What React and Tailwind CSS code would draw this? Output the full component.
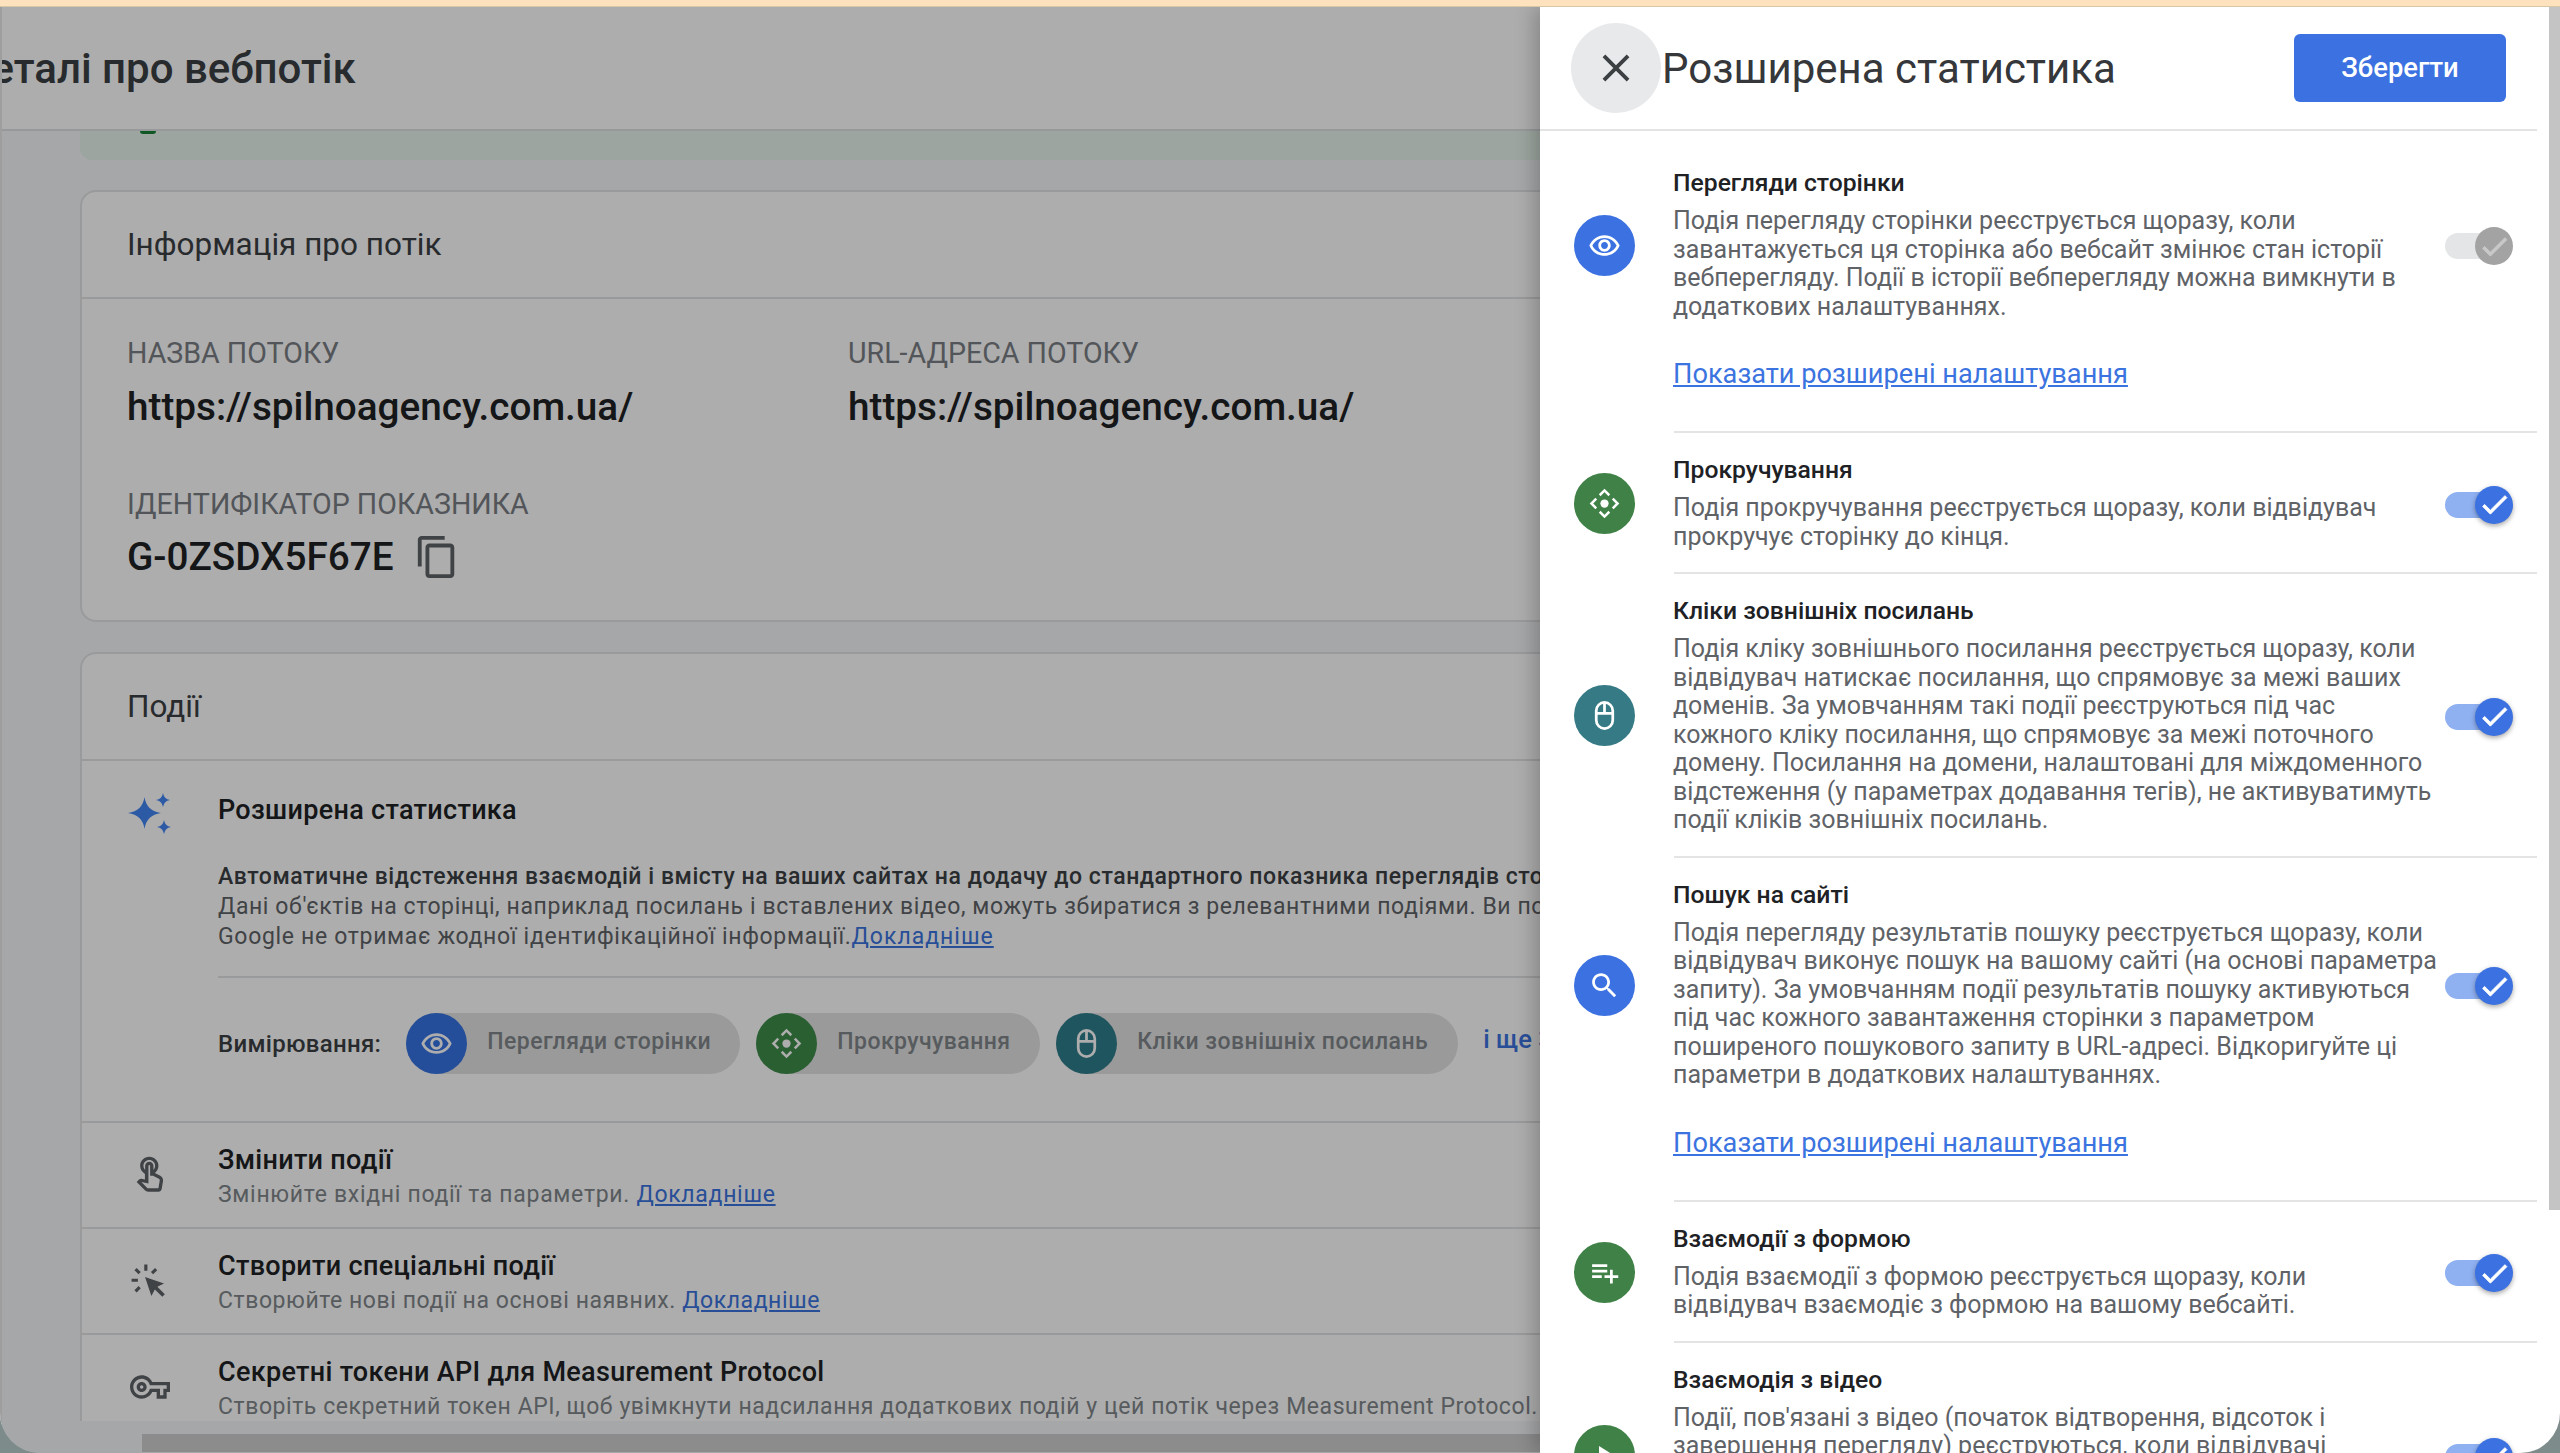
import React from 'react';

const paths = {
  eye: 'M12 6.5c3.79 0 7.17 2.13 8.82 5.5-1.65 3.37-5.02 5.5-8.82 5.5S4.83 15.37 3.18 12C4.83 8.63 8.21 6.5 12 6.5m0-2C7 4.5 2.73 7.61 1 12c1.73 4.39 6 7.5 11 7.5s9.27-3.11 11-7.5c-1.73-4.39-6-7.5-11-7.5zm0 5c1.38 0 2.5 1.12 2.5 2.5s-1.12 2.5-2.5 2.5-2.5-1.12-2.5-2.5 1.12-2.5 2.5-2.5m0-2c-2.48 0-4.5 2.02-4.5 4.5s2.02 4.5 4.5 4.5 4.5-2.02 4.5-4.5-2.02-4.5-4.5-4.5z',
  search: 'M15.5 14h-.79l-.28-.27C15.41 12.59 16 11.11 16 9.5 16 5.91 13.09 3 9.5 3S3 5.91 3 9.5 5.91 16 9.5 16c1.61 0 3.09-.59 4.23-1.57l.27.28v.79l5 4.99L20.49 19l-4.99-5zm-6 0C7.01 14 5 11.99 5 9.5S7.01 5 9.5 5 14 7.01 14 9.5 11.99 14 9.5 14z',
  playlist: 'M14 10H3v2h11v-2zm0-4H3v2h11V6zm4 8v-4h-2v4h-4v2h4v4h2v-4h4v-2h-4zM3 16h7v-2H3v2z',
  play: 'M8 5v14l11-7z',
  check: 'M9 16.17L4.83 12l-1.42 1.41L9 19 21 7l-1.41-1.41z',
  close: 'M19 6.41L17.59 5 12 10.59 6.41 5 5 6.41 10.59 12 5 17.59 6.41 19 12 13.41 17.59 19 19 17.59 13.41 12z',
  touch: 'M18.19 12.44l-3.24-1.62c1.29-1 2.12-2.56 2.12-4.32C17.07 3.47 14.6 1 11.57 1S6.07 3.47 6.07 6.5c0 2.08 1.17 3.89 2.88 4.83v3.43c-2.15-.46-2.02-.44-2.26-.44-.53 0-1.03.21-1.41.59L4 16.22l5.09 5.09C9.52 21.75 10.12 22 10.74 22h6.3c.98 0 1.81-.7 1.97-1.67l.8-4.71c.22-1.3-.43-2.58-1.62-3.18zm-.35 2.85l-.8 4.71h-6.3c-.09 0-.17-.04-.24-.1l-3.68-3.68 4.25.89V6.5c0-.28.22-.5.5-.5s.5.22.5.5v6h1.76l3.46 1.73c.4.2.62.63.55 1.06zM8.07 6.5c0-1.93 1.57-3.5 3.5-3.5s3.5 1.57 3.5 3.5c0 .95-.38 1.81-1 2.44V6.5C14.07 5.12 12.95 4 11.57 4S9.07 5.12 9.07 6.5v2.44c-.62-.63-1-1.49-1-2.44z',
  key: 'M22 19h-6v-4h-2.68c-1.14 2.42-3.6 4-6.32 4-3.86 0-7-3.14-7-7s3.14-7 7-7c2.72 0 5.17 1.58 6.32 4H24v6h-2v4zm-4-2h2v-4h2v-2H11.94l-.23-.67C11.01 8.34 9.11 7 7 7c-2.76 0-5 2.24-5 5s2.24 5 5 5c2.11 0 4.01-1.34 4.71-3.33l.23-.67H18v4zM7 15c-1.65 0-3-1.35-3-3s1.35-3 3-3 3 1.35 3 3-1.35 3-3 3zm0-4c-.55 0-1 .45-1 1s.45 1 1 1 1-.45 1-1-.45-1-1-1z',
  copy: 'M16 1H4c-1.1 0-2 .9-2 2v14h2V3h12V1zm3 4H8c-1.1 0-2 .9-2 2v14c0 1.1.9 2 2 2h11c1.1 0 2-.9 2-2V7c0-1.1-.9-2-2-2zm0 16H8V7h11v14z',
};

const Icon = ({ name, className }) => (
  <svg viewBox="0 0 24 24" fill="currentColor" className={className}>
    <path d={paths[name]} />
  </svg>
);

// Scroll glyph: dot with four chevrons
const ScrollIcon = ({ className }) => (
  <svg viewBox="0 0 24 24" fill="none" stroke="currentColor" strokeWidth="1.8" className={className}>
    <circle cx="12" cy="12" r="3" fill="currentColor" stroke="none" />
    <path d="M8.5 6L12 2.5 15.5 6M8.5 18L12 21.5 15.5 18M6 8.5L2.5 12 6 15.5M18 8.5L21.5 12 18 15.5" />
  </svg>
);

const MouseIcon = ({ className }) => (
  <svg viewBox="0 0 24 24" fill="none" stroke="currentColor" strokeWidth="2" className={className}>
    <rect x="6" y="2.5" width="12" height="19" rx="6" />
    <path d="M6 10.5h12M12 2.5v8" />
  </svg>
);

const SparkleIcon = ({ className }) => (
  <svg viewBox="0 0 42 42" fill="currentColor" className={className}>
    <path d="M14.5 4Q16.5 18 31 20 16.5 22 14.5 36 12.5 22-2 20 12.5 18 14.5 4Z" />
    <path d="M33 0Q34 6 40 7 34 8 33 14 32 8 26 7 32 6 33 0Z" />
    <path d="M34 27Q35 33 41 34 35 35 34 41 33 35 27 34 33 33 34 27Z" />
  </svg>
);

const ClickIcon = ({ className }) => (
  <svg viewBox="0 0 24 24" fill="currentColor" className={className}>
    <path d="M9.5 9.5L21.5 13.5 17.3 15.7 22 20.4 20.4 22 15.7 17.3 13.5 21.5Z" />
    <path d="M10 1.5v4M3.5 4.5l2.6 2.6M16.5 4.5l-2.6 2.6M1 11.5h4M3.5 18.5l2.6-2.6" fill="none" stroke="currentColor" strokeWidth="2" />
  </svg>
);

const Toggle = ({ disabled }) => (
  <div className="flex items-center">
    <div className={`h-[26px] w-[50px] rounded-full ${disabled ? 'bg-[#e3e5e6]' : 'bg-[#8fb0f1]'}`} />
    <div
      className={`-ml-[20px] flex h-[38px] w-[38px] items-center justify-center rounded-full ${
        disabled ? 'bg-[#a3a3a3] text-[#c9c9c9]' : 'bg-[#3b71e0] text-white shadow-[0_2px_5px_rgba(0,0,0,0.35)]'
      }`}
    >
      <Icon name="check" className="h-[33px] w-[33px] stroke-current stroke-[0.7]" />
    </div>
  </div>
);

const ShowMore = () => (
  <div className="ml-[133px] pt-[17px] pb-[44px] text-[27.2px] leading-[28px] text-[#3b74e0] underline">
    Показати розширені налаштування
  </div>
);

const Feature = ({ title, lines, color, icon, disabled, more, first }) => (
  <section>
    <div className={`flex items-center pl-[34px] pr-[24px] pb-[22px] ${first ? 'pt-[38px]' : 'pt-[23px]'}`}>
      <div className={`mr-[38px] flex h-[61px] w-[61px] shrink-0 items-center justify-center rounded-full text-white ${color}`}>
        {icon}
      </div>
      <div>
        <h3 className="text-[24.7px] leading-[28px] font-medium text-[#202124]">{title}</h3>
        <p className="mt-[10px] text-[25px] leading-[28.5px] text-[#5f6368]">
          {lines.map((line) => (
            <span key={line} className="block whitespace-nowrap">{line}</span>
          ))}
        </p>
      </div>
      <div className="mt-[2px] ml-auto">
        <Toggle disabled={disabled} />
      </div>
    </div>
    {more && <ShowMore />}
    <div className="-mt-[1px] ml-[134px] border-t-2 border-[#e4e4e4]" />
  </section>
);

const features = [
  {
    title: 'Перегляди сторінки',
    color: 'bg-[#3b71e0]',
    icon: <Icon name="eye" className="h-[33px] w-[33px]" />,
    disabled: true,
    more: true,
    first: true,
    lines: [
      'Подія перегляду сторінки реєструється щоразу, коли',
      'завантажується ця сторінка або вебсайт змінює стан історії',
      'вебперегляду. Події в історії вебперегляду можна вимкнути в',
      'додаткових налаштуваннях.',
    ],
  },
  {
    title: 'Прокручування',
    color: 'bg-[#3f8146]',
    icon: <ScrollIcon className="h-[33px] w-[33px]" />,
    lines: ['Подія прокручування реєструється щоразу, коли відвідувач', 'прокручує сторінку до кінця.'],
  },
  {
    title: 'Кліки зовнішніх посилань',
    color: 'bg-[#357a85]',
    icon: <MouseIcon className="h-[33px] w-[33px]" />,
    lines: [
      'Подія кліку зовнішнього посилання реєструється щоразу, коли',
      'відвідувач натискає посилання, що спрямовує за межі ваших',
      'доменів. За умовчанням такі події реєструються під час',
      'кожного кліку посилання, що спрямовує за межі поточного',
      'домену. Посилання на домени, налаштовані для міждоменного',
      'відстеження (у параметрах додавання тегів), не активуватимуть',
      'події кліків зовнішніх посилань.',
    ],
  },
  {
    title: 'Пошук на сайті',
    color: 'bg-[#3b71e0]',
    icon: <Icon name="search" className="h-[33px] w-[33px]" />,
    more: true,
    lines: [
      'Подія перегляду результатів пошуку реєструється щоразу, коли',
      'відвідувач виконує пошук на вашому сайті (на основі параметра',
      'запиту). За умовчанням події результатів пошуку активуються',
      'під час кожного завантаження сторінки з параметром',
      'поширеного пошукового запиту в URL-адресі. Відкоригуйте ці',
      'параметри в додаткових налаштуваннях.',
    ],
  },
  {
    title: 'Взаємодії з формою',
    color: 'bg-[#3f8146]',
    icon: <Icon name="playlist" className="h-[33px] w-[33px]" />,
    lines: ['Подія взаємодії з формою реєструється щоразу, коли', 'відвідувач взаємодіє з формою на вашому вебсайті.'],
  },
  {
    title: 'Взаємодія з відео',
    color: 'bg-[#3f8146]',
    icon: <Icon name="play" className="h-[33px] w-[33px]" />,
    lines: [
      "Події, пов'язані з відео (початок відтворення, відсоток і",
      'завершення перегляду) реєструються, коли відвідувачі',
      'переглядають вбудовані на вашому сайті відео. Ці події',
      'активуються автоматично для відео з API JavaScript',
      'увімкненим у параметрах вбудовування.',
    ],
  },
];

const Chip = ({ label, color, icon, width }) => (
  <div className={`flex h-[61px] shrink-0 items-center rounded-full bg-[#e3e3e3] ${width}`}>
    <div className={`flex h-[61px] w-[61px] shrink-0 items-center justify-center rounded-full text-white ${color}`}>{icon}</div>
    <span className="ml-[20px] -mt-[3px] text-[23px] font-medium tracking-[0.45px] whitespace-nowrap text-[#80868b]">{label}</span>
  </div>
);

const ActionRow = ({ icon, title, text, link, spacing = 'tracking-[0.57px]' }) => (
  <div className="flex h-[106px] border-t-2 border-[#e2e3e5]">
    <div className="flex w-[136px] shrink-0 items-center pl-[48px] text-[#5f6368]">{icon}</div>
    <div className="pt-[21px]">
      <div className="text-[27px] leading-[32px] font-medium tracking-[0.3px] text-[#202124]">{title}</div>
      <div className={`mt-[4px] text-[23px] leading-[30px] text-[#80868b] ${spacing}`}>
        {text} {link && <a className="text-[#3b74e0] underline">Докладніше</a>}
      </div>
    </div>
  </div>
);

const Page = () => (
  <main className="flex h-full w-full flex-col overflow-hidden border-l-2 border-[#e9e9e9] bg-[#f5f6f8]">
    <header className="flex h-[124px] shrink-0 items-center overflow-hidden border-b-2 border-[#dfe0e2] bg-white">
      <h1 className="-ml-[42px] text-[42px] font-medium whitespace-nowrap text-[#3c4043]">Деталі про вебпотік</h1>
    </header>

    <div className="min-h-0 flex-1 overflow-hidden">
      <div className="ml-[78px] flex h-[29px] w-[2400px] justify-start rounded-b-[12px] bg-[#e6f4ea] pl-[60px]">
        <div className="h-[3px] w-[16px] rounded-b-[8px] bg-[#188038]" />
      </div>

      <section className="mt-[30px] ml-[78px] w-[2400px] rounded-[16px] border-2 border-[#e2e3e5] bg-white">
        <div className="flex h-[107px] items-center border-b-2 border-[#e2e3e5] pl-[45px] text-[31.5px] text-[#3c4043]">
          Інформація про потік
        </div>
        <div className="pt-[39px] pb-[40px] pl-[45px]">
          <div className="flex">
            <div className="w-[721px]">
              <div className="text-[28.6px] leading-[30px] text-[#7a7e83]">НАЗВА ПОТОКУ</div>
              <div className="mt-[19px] text-[38.7px] leading-[40px] font-medium text-[#202124]">https://spilnoagency.com.ua/</div>
            </div>
            <div>
              <div className="text-[28.6px] leading-[30px] text-[#7a7e83]">URL-АДРЕСА ПОТОКУ</div>
              <div className="mt-[19px] text-[38.7px] leading-[40px] font-medium text-[#202124]">https://spilnoagency.com.ua/</div>
            </div>
          </div>
          <div className="mt-[62px] text-[28.6px] leading-[30px] text-[#7a7e83]">ІДЕНТИФІКАТОР ПОКАЗНИКА</div>
          <div className="mt-[15px] flex items-center text-[38.7px] leading-[40px] font-medium text-[#202124]">
            G-0ZSDX5F67E
            <Icon name="copy" className="ml-[20px] h-[46px] w-[46px] text-[#5f6368]" />
          </div>
        </div>
      </section>

      <section className="mt-[30px] ml-[78px] w-[2400px] rounded-t-[16px] border-x-2 border-t-2 border-[#e2e3e5] bg-white">
        <div className="flex h-[107px] items-center border-b-2 border-[#e2e3e5] pl-[45px] text-[31.5px] text-[#3c4043]">Події</div>
        <div className="flex">
          <div className="w-[136px] shrink-0 pt-[32px] pl-[48px]">
            <SparkleIcon className="h-[42px] w-[42px] overflow-visible text-[#4285f4]" />
          </div>
          <div className="flex-1 pt-[33px] pb-[47px]">
            <div className="text-[27px] leading-[32px] font-medium tracking-[0.3px] text-[#202124]">Розширена статистика</div>
            <div className="mt-[36px] border-b-2 border-[#e2e3e5] pb-[24px] text-[23px] leading-[30px] tracking-[0.6px] whitespace-nowrap text-[#5f6368]">
              <div className="font-medium tracking-[0.55px] text-[#3c4043]">
                Автоматичне відстеження взаємодій і вмісту на ваших сайтах на додачу до стандартного показника переглядів сторінок.
              </div>
              <div>Дані об'єктів на сторінці, наприклад посилань і вставлених відео, можуть збиратися з релевантними подіями. Ви повинні</div>
              <div className="tracking-[0.68px]">
                Google не отримає жодної ідентифікаційної інформації.<a className="tracking-[1px] text-[#3b74e0] underline">Докладніше</a>
              </div>
            </div>
            <div className="mt-[35px] flex items-center">
              <span className="mr-[25px] text-[24px] font-medium tracking-[0.3px] text-[#3c4043]">Вимірювання:</span>
              <div className="flex gap-[16px]">
                <Chip label="Перегляди сторінки" color="bg-[#3773e4]" icon={<Icon name="eye" className="h-[33px] w-[33px]" />} width="w-[334px]" />
                <Chip label="Прокручування" color="bg-[#3f8c4b]" icon={<ScrollIcon className="h-[33px] w-[33px]" />} width="w-[284px]" />
                <Chip label="Кліки зовнішніх посилань" color="bg-[#2f7e8c]" icon={<MouseIcon className="h-[33px] w-[33px]" />} width="w-[402px]" />
              </div>
              <a className="ml-[25px] -mt-[8px] text-[25.5px] font-medium whitespace-nowrap text-[#3b74e0]">і ще 3</a>
            </div>
          </div>
        </div>
        <ActionRow
          icon={<Icon name="touch" className="h-[40px] w-[40px]" />}
          title="Змінити події"
          text="Змінюйте вхідні події та параметри."
          spacing="tracking-[0.7px]"
          link
        />
        <ActionRow
          icon={<ClickIcon className="h-[38px] w-[38px]" />}
          title="Створити спеціальні події"
          text="Створюйте нові події на основі наявних."
          link
        />
        <ActionRow
          icon={<Icon name="key" className="h-[40px] w-[40px]" />}
          title="Секретні токени API для Measurement Protocol"
          text="Створіть секретний токен API, щоб увімкнути надсилання додаткових подій у цей потік через Measurement Protocol."
        />
      </section>
    </div>

    {/* horizontal scrollbar */}
    <div className="h-[32px] shrink-0 pt-[13px] pl-[140px]">
      <div className="h-[18px] w-[2400px] bg-[#cecece]" />
    </div>
  </main>
);

const Drawer = () => (
  <aside className="absolute top-0 right-0 bottom-0 w-[1020px] overflow-hidden bg-white shadow-[-6px_0_18px_rgba(0,0,0,0.22)]">
    <div className="w-[997px]">
      <header className="flex h-[124px] items-center border-b-2 border-[#e4e4e4] pl-[31px]">
        <button className="flex h-[90px] w-[90px] items-center justify-center rounded-full bg-[#e8e9ea] text-[#3c4043]">
          <Icon name="close" className="h-[46px] w-[46px]" />
        </button>
        <h2 className="ml-[1px] text-[42px] whitespace-nowrap text-[#35373a]">Розширена статистика</h2>
        <button className="mr-[31px] ml-auto flex h-[68px] w-[212px] items-center justify-center rounded-[6px] bg-[#3b71e0] pt-[2px] text-[27.4px] font-medium text-white">
          Зберегти
        </button>
      </header>
      {features.map((item) => (
        <Feature key={item.title} {...item} />
      ))}
    </div>
    {/* panel scrollbar */}
    <div className="absolute top-0 right-0 h-[1203px] w-[11px] bg-[#c4c4c4]" />
  </aside>
);

export default function App() {
  return (
    <div className="h-[1453px] w-[2560px] overflow-hidden bg-[#7d8b8b] font-['Roboto',sans-serif]">
      <div className="h-[7px] border-b border-[#d8c6a9] bg-[#fde2bd]" />
      <div className="relative h-[1446px] overflow-hidden rounded-b-[40px]">
        <Page />
        <div className="absolute inset-0 bg-black/32" />
        <Drawer />
      </div>
    </div>
  );
}
